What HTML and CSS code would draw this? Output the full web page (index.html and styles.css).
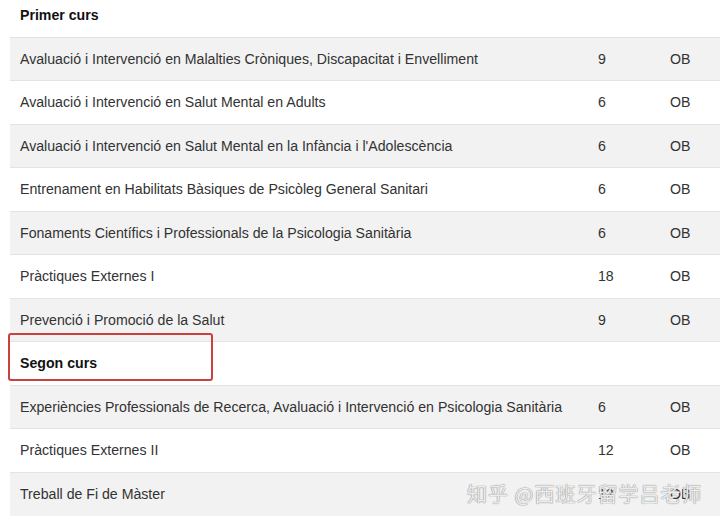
FILE: index.html
```html
<!DOCTYPE html>
<html>
<head>
<meta charset="utf-8">
<link rel="stylesheet" href="styles.css">
</head>
<body>
<div class="page">
  <table class="plan">
    <colgroup>
      <col class="c-name"><col class="c-cred"><col class="c-type">
    </colgroup>
    <tbody>
      <tr class="head first"><td colspan="3">Primer curs</td></tr>
      <tr class="g"><td>Avaluació i Intervenció en Malalties Cròniques, Discapacitat i Envelliment</td><td>9</td><td>OB</td></tr>
      <tr><td>Avaluació i Intervenció en Salut Mental en Adults</td><td>6</td><td>OB</td></tr>
      <tr class="g"><td>Avaluació i Intervenció en Salut Mental en la Infància i l'Adolescència</td><td>6</td><td>OB</td></tr>
      <tr><td>Entrenament en Habilitats Bàsiques de Psicòleg General Sanitari</td><td>6</td><td>OB</td></tr>
      <tr class="g"><td>Fonaments Científics i Professionals de la Psicologia Sanitària</td><td>6</td><td>OB</td></tr>
      <tr><td>Pràctiques Externes I</td><td>18</td><td>OB</td></tr>
      <tr class="g"><td>Prevenció i Promoció de la Salut</td><td>9</td><td>OB</td></tr>
      <tr class="head"><td colspan="3">Segon curs</td></tr>
      <tr class="g"><td>Experiències Professionals de Recerca, Avaluació i Intervenció en Psicologia Sanitària</td><td>6</td><td>OB</td></tr>
      <tr><td>Pràctiques Externes II</td><td>12</td><td>OB</td></tr>
      <tr class="g"><td>Treball de Fi de Màster</td><td>12</td><td>OB</td></tr>
    </tbody>
  </table>
  <div class="highlight"></div>
  <div class="watermark">知乎 @西班牙留学吕老师</div>
</div>
</body>
</html>
```

FILE: styles.css
```css
html, body {
  margin: 0;
  padding: 0;
  background: #fff;
  overflow: hidden;
}
.page {
  position: relative;
  width: 720px;
  height: 521px;
  overflow: hidden;
  font-family: "Liberation Sans", Arial, sans-serif;
  font-size: 14.15px;
  color: #333;
}
.plan {
  margin-left: 10px;
  width: 720px;
  border-collapse: collapse;
  table-layout: fixed;
}
.c-name { width: 578px; }
.c-cred { width: 72px; }
.c-type { width: 70px; }
.plan td {
  height: 43.5px;
  padding: 0 10px;
  box-sizing: border-box;
  border-top: 1px solid #e3e3e3;
  vertical-align: middle;
  white-space: nowrap;
}
.plan tr.g td { background: #f2f2f2; }
.plan tr.head td {
  font-weight: bold;
  color: #111;
}
.plan tr.first td {
  height: 37px;
  border-top: 0;
  padding-top: 0;
  padding-bottom: 6px;
}
.highlight {
  position: absolute;
  left: 8px;
  top: 333px;
  width: 205px;
  height: 48px;
  box-sizing: border-box;
  border: 2px solid #c8413f;
  border-radius: 3px;
}
.watermark {
  position: absolute;
  left: 467px;
  top: 479px;
  font-family: "Noto Sans CJK SC", sans-serif;
  font-size: 20px;
  letter-spacing: 1px;
  color: rgba(255,255,255,0.85);
  text-shadow: 0 0 1px #8a8a8a, 0 0 1px #8a8a8a;
}
```
